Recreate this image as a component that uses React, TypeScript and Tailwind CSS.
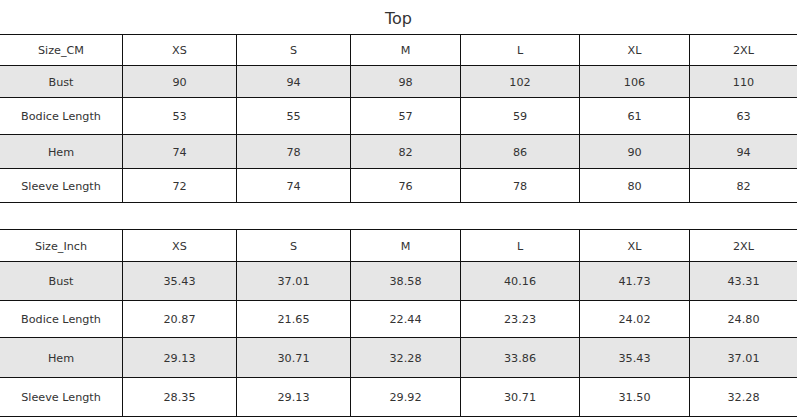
const sizes = ["XS", "S", "M", "L", "XL", "2XL"];

const cmRows = [
    { name: "Bust", values: ["90", "94", "98", "102", "106", "110"], gray: true },
    { name: "Bodice Length", values: ["53", "55", "57", "59", "61", "63"], gray: false },
    { name: "Hem", values: ["74", "78", "82", "86", "90", "94"], gray: true },
    { name: "Sleeve Length", values: ["72", "74", "76", "78", "80", "82"], gray: false },
];

const inchRows = [
    { name: "Bust", values: ["35.43", "37.01", "38.58", "40.16", "41.73", "43.31"], gray: true },
    { name: "Bodice Length", values: ["20.87", "21.65", "22.44", "23.23", "24.02", "24.80"], gray: false },
    { name: "Hem", values: ["29.13", "30.71", "32.28", "33.86", "35.43", "37.01"], gray: true },
    { name: "Sleeve Length", values: ["28.35", "29.13", "29.92", "30.71", "31.50", "32.28"], gray: false },
];

const Row = ({ cells, gray, height }: { cells: string[]; gray: boolean; height: string }) => (
    <div className={`grid grid-cols-[122px_114px_114px_110px_119px_110px_1fr] border-t border-[#111] ${height} ${gray ? "bg-[#e6e6e6]" : "bg-white"}`}>
        {cells.map((c, i) => (
            <div key={i} className={`flex items-center justify-center pt-[3px] ${i > 0 ? "border-l border-[#111]" : ""}`}>
                {c}
            </div>
        ))}
    </div>
);

const SizeTable = ({ label, rows, heights }: { label: string; rows: typeof cmRows; heights: string[] }) => (
    <div className="border-b border-[#111]">
        <Row cells={[label, ...sizes]} gray={false} height={heights[0]} />
        {rows.map((r, i) => (
            <Row key={r.name} cells={[r.name, ...r.values]} gray={r.gray} height={heights[i + 1]} />
        ))}
    </div>
);

const App = () => {
    return (
        <main className="w-[797px] h-[420px] bg-white text-[#333] text-[11.2px] overflow-hidden" style={{ fontFamily: '"DejaVu Sans", Verdana, sans-serif' }}>
            <div className="h-[34px] flex items-center justify-center text-[16px] pt-[3px]">Top</div>
            <SizeTable label="Size_CM" rows={cmRows} heights={["h-[31px]", "h-[32px]", "h-[37px]", "h-[34px]", "h-[34px]"]} />
            <div className="h-[26px]" />
            <SizeTable label="Size_Inch" rows={inchRows} heights={["h-[32px]", "h-[39px]", "h-[37px]", "h-[40px]", "h-[39px]"]} />
        </main>
    );
};

export default App;
